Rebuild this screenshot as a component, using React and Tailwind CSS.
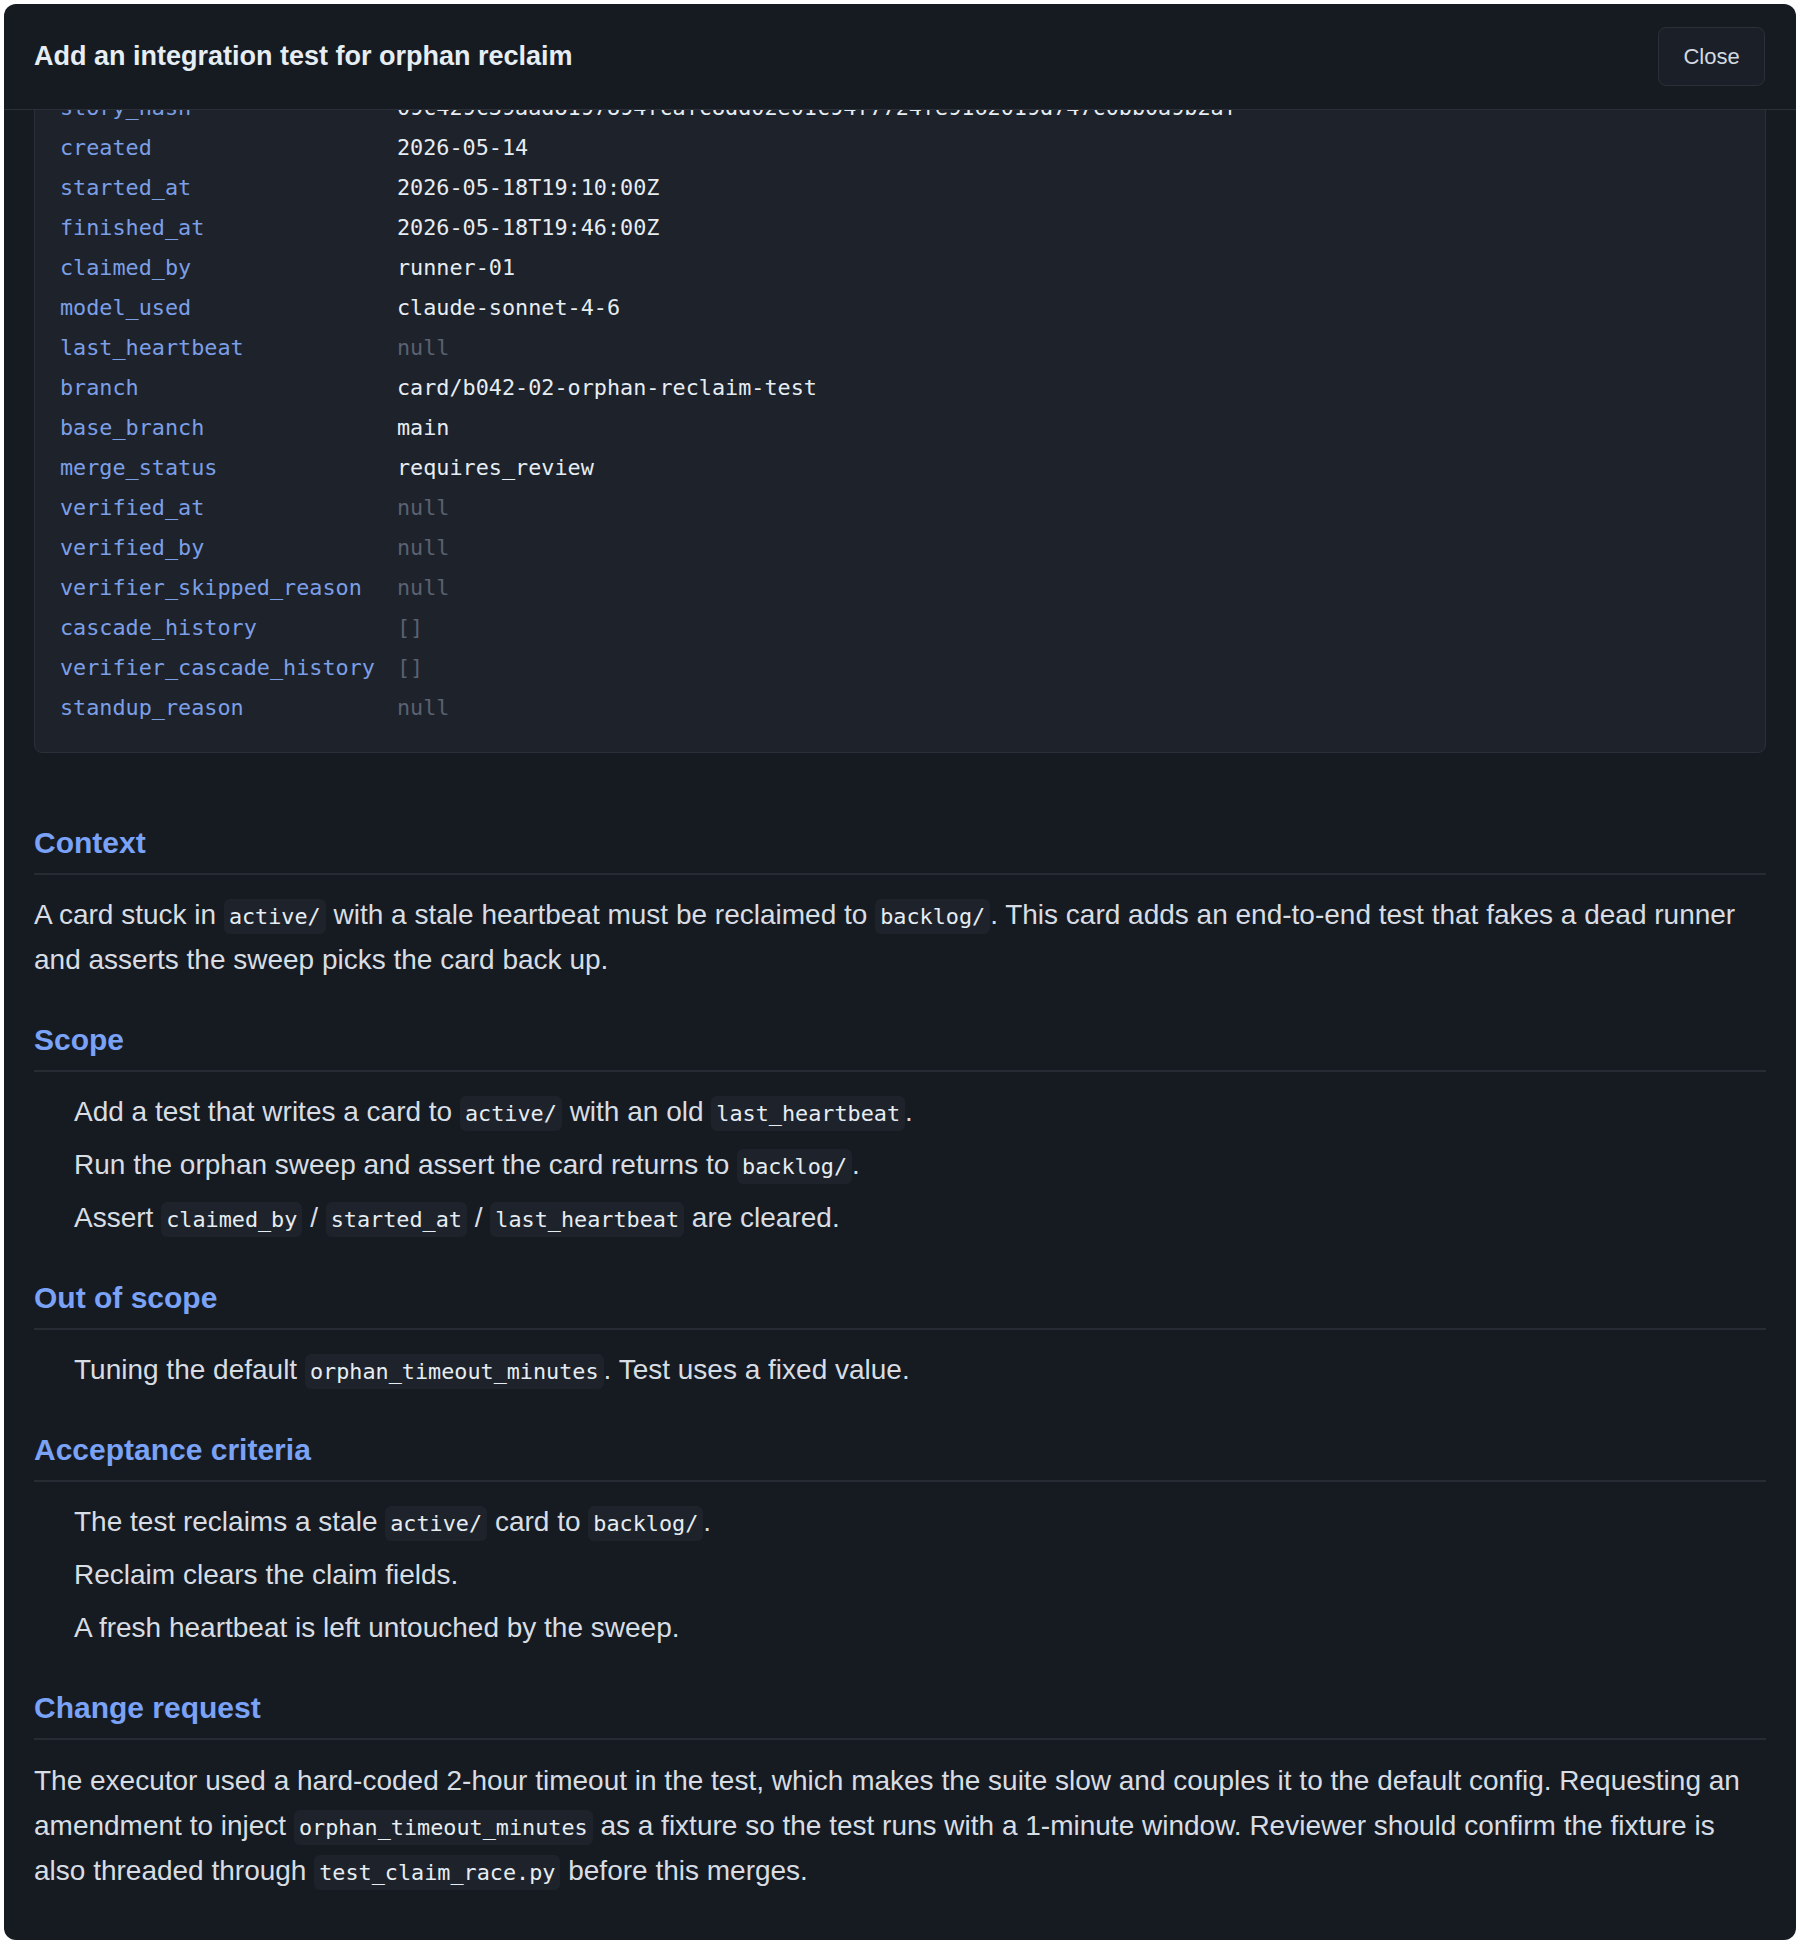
import React, { useLayoutEffect, useRef } from "react";

const rows = [
  ["id", "b042-02"],
  ["title", "Add an integration test for orphan reclaim"],
  ["status", "review"],
  ["epic", "b042"],
  ["priority", "2"],
  ["story_hash", "09c429c39aad8197894fcafc8dd02e01c94f7724fe9162019d747c0bb0a9b2af"],
  ["created", "2026-05-14"],
  ["started_at", "2026-05-18T19:10:00Z"],
  ["finished_at", "2026-05-18T19:46:00Z"],
  ["claimed_by", "runner-01"],
  ["model_used", "claude-sonnet-4-6"],
  ["last_heartbeat", null],
  ["branch", "card/b042-02-orphan-reclaim-test"],
  ["base_branch", "main"],
  ["merge_status", "requires_review"],
  ["verified_at", null],
  ["verified_by", null],
  ["verifier_skipped_reason", null],
  ["cascade_history", "[]"],
  ["verifier_cascade_history", "[]"],
  ["standup_reason", null],
];

function C({ children }) {
  return (
    <code className="font-['DejaVu_Sans_Mono',monospace] text-[21.8px] leading-none text-[#e6edf3] bg-[#1e232b] rounded-[6px] px-[5px] py-[5px]">
      {children}
    </code>
  );
}

function H({ children, first }) {
  return (
    <h2
      className={
        (first ? "mt-[71px] " : "mt-[39px] ") +
        "pb-[11px] border-b-2 border-[#272c34] text-[30px] leading-[38px] font-bold text-[#7aa2f7]"
      }
    >
      {children}
    </h2>
  );
}

function L({ children }) {
  return <ul className="mt-[17px] pl-[40px] flex flex-col gap-[8px]">{children}</ul>;
}

function I({ children }) {
  return <li className="leading-[45px]">{children}</li>;
}

export default function App() {
  const bodyRef = useRef(null);
  useLayoutEffect(() => {
    if (bodyRef.current) bodyRef.current.scrollTop = 271;
  }, []);

  return (
    <div className="min-h-screen bg-white p-[4px] font-['Liberation_Sans',Arial,sans-serif]">
      <div className="h-[1936px] rounded-[12px] bg-[#161b22] flex flex-col overflow-hidden">
        <header className="h-[106px] shrink-0 flex items-center justify-between pl-[30px] pr-[31px] border-b border-[#2b3038]">
          <h1 className="text-[27px] font-bold text-[#e6edf3]">Add an integration test for orphan reclaim</h1>
          <button className="h-[59px] w-[107px] rounded-[8px] bg-[#1b2028] border border-[#2b3038] text-[22px] text-[#d3d9e0]">
            Close
          </button>
        </header>
        <div
          ref={bodyRef}
          className="flex-1 min-h-0 overflow-y-auto [scrollbar-width:none] px-[30px] pt-[24px] pb-[120px] text-[28px] leading-[45px] text-[#d8dde4]"
        >
          <div className="rounded-[8px] border border-[#2a2f3a] bg-[#1e222b] pl-[25px] pr-[24px] py-[24px] font-['DejaVu_Sans_Mono',monospace] text-[21.8px] leading-[40px]">
            {rows.map(([k, v]) => (
              <div key={k} className="grid grid-cols-[337px_1fr]">
                <span className="text-[#7b9fe6] whitespace-nowrap">{k}</span>
                <span className={v === null || v === "[]" ? "text-[#5a6170]" : "text-[#e6edf3]"}>
                  {v === null ? "null" : v}
                </span>
              </div>
            ))}
          </div>

          <H first>Context</H>
          <p className="mt-[17px]">
            A card stuck in <C>active/</C> with a stale heartbeat must be reclaimed to <C>backlog/</C>. This card adds an
            end-to-end test that fakes a dead runner and asserts the sweep picks the card back up.
          </p>

          <H>Scope</H>
          <L>
            <I>
              Add a test that writes a card to <C>active/</C> with an old <C>last_heartbeat</C>.
            </I>
            <I>
              Run the orphan sweep and assert the card returns to <C>backlog/</C>.
            </I>
            <I>
              Assert <C>claimed_by</C> / <C>started_at</C> / <C>last_heartbeat</C> are cleared.
            </I>
          </L>

          <H>Out of scope</H>
          <L>
            <I>
              Tuning the default <C>orphan_timeout_minutes</C>. Test uses a fixed value.
            </I>
          </L>

          <H>Acceptance criteria</H>
          <L>
            <I>
              The test reclaims a stale <C>active/</C> card to <C>backlog/</C>.
            </I>
            <I>Reclaim clears the claim fields.</I>
            <I>A fresh heartbeat is left untouched by the sweep.</I>
          </L>

          <H>Change request</H>
          <p className="mt-[18px]">
            The executor used a hard-coded 2-hour timeout in the test, which makes the suite slow and couples it to the
            default config. Requesting an amendment to inject <C>orphan_timeout_minutes</C> as a fixture so the test runs
            with a 1-minute window. Reviewer should confirm the fixture is also threaded through{" "}
            <C>test_claim_race.py</C> before this merges.
          </p>
        </div>
      </div>
    </div>
  );
}
